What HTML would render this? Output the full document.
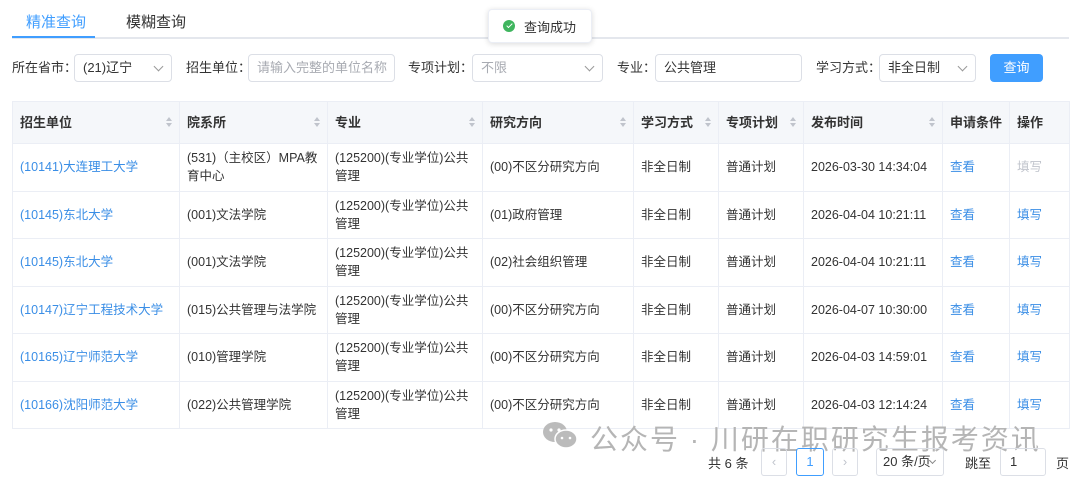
<!DOCTYPE html>
<html><head><meta charset="utf-8"><style>
*{box-sizing:border-box;margin:0;padding:0}
body{width:1080px;height:479px;background:#fff;font-family:"Liberation Sans","Noto Sans CJK SC",sans-serif;font-size:13px;color:#333;position:relative;overflow:hidden}
.abs{position:absolute}
.tab{position:absolute;top:11px;font-size:15px}
.inp{position:absolute;top:54px;height:28px;border:1px solid #dcdfe6;border-radius:4px;padding-left:8px;line-height:26px;font-size:13px;background:#fff;white-space:nowrap}
.lbl{position:absolute;top:54px;line-height:28px;font-size:13px;color:#333}
.chev{position:absolute;right:9px;top:8px;width:7px;height:7px;border-right:1px solid #999;border-bottom:1px solid #999;transform:rotate(45deg)}
table{position:absolute;left:12px;top:101px;width:1057px;border-collapse:collapse;table-layout:fixed}
td,th{border:1px solid #ebeef5;padding:0 7px;text-align:left;vertical-align:middle;font-size:12.5px;line-height:18px}
th{background:#f5f7fa;height:42px;font-weight:bold;color:#333;position:relative;font-size:13px}
td{height:47.5px;color:#333}
.s{position:absolute;right:10px;top:15px;width:0;height:0}
.s:before{content:"";position:absolute;left:-3px;top:0;border:3px solid transparent;border-bottom:4px solid #c0c4cc;border-top:0}
.s:after{content:"";position:absolute;left:-3px;top:6px;border:3px solid transparent;border-top:4px solid #c0c4cc;border-bottom:0}
a{color:#3a8ee6;text-decoration:none}
.g{color:#c0c4cc}
.pb{position:absolute;top:448px;height:28px;border:1px solid #dcdfe6;border-radius:3px;line-height:26px;text-align:center;font-size:13px;white-space:nowrap;overflow:hidden}
</style></head><body>
<div class="tab" style="left:26px;color:#409eff">精准查询</div>
<div class="tab" style="left:126px">模糊查询</div>
<div class="abs" style="left:12px;top:37px;width:1057px;height:2px;background:#e4e7ed"></div>
<div class="abs" style="left:12px;top:36px;width:83px;height:2px;background:#409eff"></div>
<div class="abs" style="left:488px;top:9px;width:104px;height:34px;background:#fff;border-radius:4px;box-shadow:0 1px 6px rgba(0,0,0,.15);border:1px solid #ebeef5"></div>
<div class="abs" style="left:503px;top:20px;width:12px;height:12px;border-radius:50%;background:#3fb55e"></div>
<div class="abs" style="left:507.5px;top:22px;width:3px;height:6px;border-right:1.5px solid #fff;border-bottom:1.5px solid #fff;transform:rotate(45deg)"></div>
<div class="abs" style="left:524px;top:17px;font-size:13px">查询成功</div>

<div class="lbl" style="left:12px">所在省市：</div>
<div class="inp" style="left:74px;width:98px">(21)辽宁<span class="chev"></span></div>
<div class="lbl" style="left:186px">招生单位：</div>
<div class="inp" style="left:248px;width:147px;color:#a8abb2">请输入完整的单位名称</div>
<div class="lbl" style="left:408px">专项计划：</div>
<div class="inp" style="left:472px;width:131px;color:#a8abb2">不限<span class="chev"></span></div>
<div class="lbl" style="left:617px">专业：</div>
<div class="inp" style="left:655px;width:147px">公共管理</div>
<div class="lbl" style="left:816px">学习方式：</div>
<div class="inp" style="left:879px;width:97px">非全日制<span class="chev"></span></div>
<div class="abs" style="left:990px;top:54px;width:53px;height:28px;background:#409eff;border-radius:4px;color:#fff;text-align:center;line-height:28px">查询</div>

<table>
<colgroup><col style="width:167px"><col style="width:148px"><col style="width:155px"><col style="width:151px"><col style="width:85px"><col style="width:85px"><col style="width:139px"><col style="width:67px"><col style="width:60px"></colgroup>
<tr><th>招生单位<i class="s"></i></th><th>院系所<i class="s"></i></th><th>专业<i class="s"></i></th><th>研究方向<i class="s"></i></th><th>学习方式<i class="s"></i></th><th>专项计划<i class="s"></i></th><th>发布时间<i class="s"></i></th><th>申请条件</th><th>操作</th></tr>
<tr><td><a>(10141)大连理工大学</a></td><td>(531)（主校区）MPA教育中心</td><td>(125200)(专业学位)公共管理</td><td>(00)不区分研究方向</td><td>非全日制</td><td>普通计划</td><td>2026-03-30 14:34:04</td><td><a>查看</a></td><td class="g">填写</td></tr>
<tr><td><a>(10145)东北大学</a></td><td>(001)文法学院</td><td>(125200)(专业学位)公共管理</td><td>(01)政府管理</td><td>非全日制</td><td>普通计划</td><td>2026-04-04 10:21:11</td><td><a>查看</a></td><td><a>填写</a></td></tr>
<tr><td><a>(10145)东北大学</a></td><td>(001)文法学院</td><td>(125200)(专业学位)公共管理</td><td>(02)社会组织管理</td><td>非全日制</td><td>普通计划</td><td>2026-04-04 10:21:11</td><td><a>查看</a></td><td><a>填写</a></td></tr>
<tr><td><a>(10147)辽宁工程技术大学</a></td><td style="white-space:nowrap">(015)公共管理与法学院</td><td>(125200)(专业学位)公共管理</td><td>(00)不区分研究方向</td><td>非全日制</td><td>普通计划</td><td>2026-04-07 10:30:00</td><td><a>查看</a></td><td><a>填写</a></td></tr>
<tr><td><a>(10165)辽宁师范大学</a></td><td>(010)管理学院</td><td>(125200)(专业学位)公共管理</td><td>(00)不区分研究方向</td><td>非全日制</td><td>普通计划</td><td>2026-04-03 14:59:01</td><td><a>查看</a></td><td><a>填写</a></td></tr>
<tr><td><a>(10166)沈阳师范大学</a></td><td>(022)公共管理学院</td><td>(125200)(专业学位)公共管理</td><td>(00)不区分研究方向</td><td>非全日制</td><td>普通计划</td><td>2026-04-03 12:14:24</td><td><a>查看</a></td><td><a>填写</a></td></tr>
</table>

<svg class="abs" style="left:542px;top:420px" width="38" height="32" viewBox="0 0 38 32"><ellipse cx="13" cy="12" rx="12" ry="10" fill="#bbb"/><ellipse cx="24" cy="19" rx="11" ry="9" fill="#bbb" stroke="#fff" stroke-width="1.5"/><circle cx="9" cy="10" r="1.6" fill="#fff"/><circle cx="17" cy="10" r="1.6" fill="#fff"/><circle cx="20" cy="18" r="1.3" fill="#fff"/><circle cx="28" cy="18" r="1.3" fill="#fff"/></svg>
<div class="abs" style="left:590px;top:418px;font-size:28px;color:#b5b5b5;letter-spacing:2px;white-space:nowrap">公众号 · 川研在职研究生报考资讯</div>

<div class="abs" style="left:708px;top:453px">共 6 条</div>
<div class="pb" style="left:761px;width:26px;color:#c0c4cc">‹</div>
<div class="pb" style="left:796px;width:28px;border-color:#409eff;color:#409eff">1</div>
<div class="pb" style="left:832px;width:26px;color:#c0c4cc">›</div>
<div class="pb" style="left:876px;width:68px;text-align:left;padding-left:6px">20 条/页<span style="position:absolute;right:8px;top:9px;width:5px;height:5px;border-right:1px solid #888;border-bottom:1px solid #888;transform:rotate(45deg)"></span></div>
<div class="abs" style="left:965px;top:453px">跳至</div>
<div class="pb" style="left:1000px;width:46px;text-align:left;padding-left:9px">1</div>
<div class="abs" style="left:1056px;top:453px">页</div>
</body></html>
